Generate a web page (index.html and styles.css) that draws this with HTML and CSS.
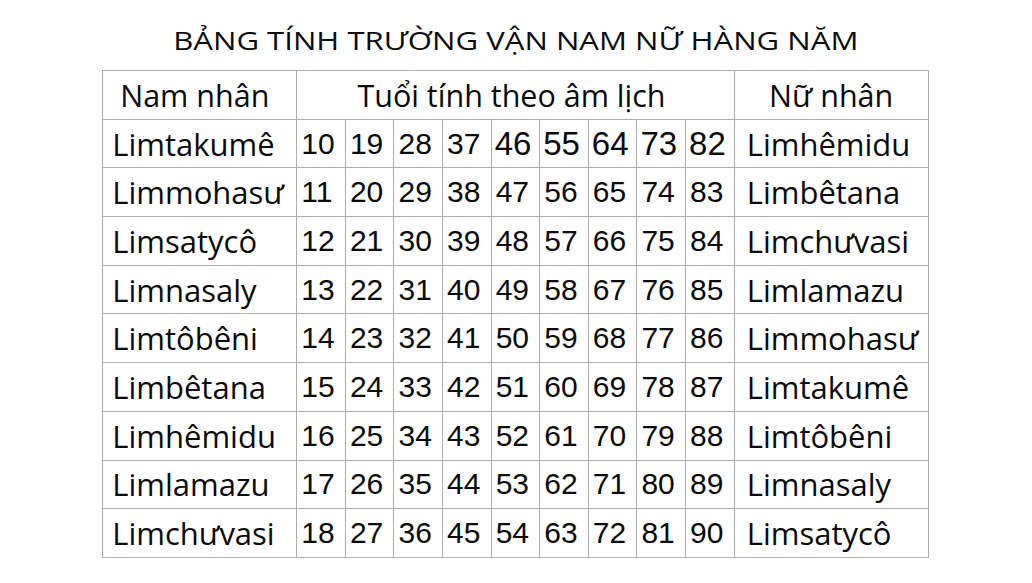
FILE: index.html
```html
<!DOCTYPE html>
<html lang="vi">
<head>
<meta charset="utf-8">
<title>Bảng tính trường vận</title>
<link rel="stylesheet" href="styles.css">
</head>
<body>
<main class="page">
  <h1 class="title">BẢNG TÍNH TRƯỜNG VẬN NAM NỮ HÀNG NĂM</h1>
  <table class="grid">
    <colgroup>
      <col class="c-name">
      <col class="c-num"><col class="c-num"><col class="c-num"><col class="c-num"><col class="c-num"><col class="c-num"><col class="c-num"><col class="c-num"><col class="c-num">
      <col class="c-name">
    </colgroup>
    <thead>
      <tr>
        <th class="head head-left">Nam nhân</th>
        <th class="head head-mid" colspan="9">Tuổi tính theo âm lịch</th>
        <th class="head">Nữ nhân</th>
      </tr>
    </thead>
    <tbody>
      <tr><td class="name">Limtakumê</td><td class="num">10</td><td class="num">19</td><td class="num">28</td><td class="num">37</td><td class="num big">46</td><td class="num big">55</td><td class="num big">64</td><td class="num big">73</td><td class="num big">82</td><td class="name right">Limhêmidu</td></tr>
      <tr><td class="name">Limmohasư</td><td class="num">11</td><td class="num">20</td><td class="num">29</td><td class="num">38</td><td class="num">47</td><td class="num">56</td><td class="num">65</td><td class="num">74</td><td class="num">83</td><td class="name right">Limbêtana</td></tr>
      <tr><td class="name">Limsatycô</td><td class="num">12</td><td class="num">21</td><td class="num">30</td><td class="num">39</td><td class="num">48</td><td class="num">57</td><td class="num">66</td><td class="num">75</td><td class="num">84</td><td class="name right">Limchưvasi</td></tr>
      <tr><td class="name">Limnasaly</td><td class="num">13</td><td class="num">22</td><td class="num">31</td><td class="num">40</td><td class="num">49</td><td class="num">58</td><td class="num">67</td><td class="num">76</td><td class="num">85</td><td class="name right">Limlamazu</td></tr>
      <tr><td class="name">Limtôbêni</td><td class="num">14</td><td class="num">23</td><td class="num">32</td><td class="num">41</td><td class="num">50</td><td class="num">59</td><td class="num">68</td><td class="num">77</td><td class="num">86</td><td class="name right">Limmohasư</td></tr>
      <tr><td class="name">Limbêtana</td><td class="num">15</td><td class="num">24</td><td class="num">33</td><td class="num">42</td><td class="num">51</td><td class="num">60</td><td class="num">69</td><td class="num">78</td><td class="num">87</td><td class="name right">Limtakumê</td></tr>
      <tr><td class="name">Limhêmidu</td><td class="num">16</td><td class="num">25</td><td class="num">34</td><td class="num">43</td><td class="num">52</td><td class="num">61</td><td class="num">70</td><td class="num">79</td><td class="num">88</td><td class="name right">Limtôbêni</td></tr>
      <tr><td class="name">Limlamazu</td><td class="num">17</td><td class="num">26</td><td class="num">35</td><td class="num">44</td><td class="num">53</td><td class="num">62</td><td class="num">71</td><td class="num">80</td><td class="num">89</td><td class="name right">Limnasaly</td></tr>
      <tr><td class="name">Limchưvasi</td><td class="num">18</td><td class="num">27</td><td class="num">36</td><td class="num">45</td><td class="num">54</td><td class="num">63</td><td class="num">72</td><td class="num">81</td><td class="num">90</td><td class="name right">Limsatycô</td></tr>
    </tbody>
  </table>
</main>
</body>
</html>
```

FILE: styles.css
```css
html, body {
  margin: 0;
  padding: 0;
  background: #ffffff;
}

.page {
  width: 1032px;
  height: 583px;
  display: flex;
  flex-direction: column;
  align-items: center;
  padding-top: 25px;
  box-sizing: border-box;
  color: #0a0a0a;
}

.title {
  margin: 0 0 15px 0;
  font-family: "Open Sans", "Noto Sans", sans-serif;
  font-weight: 400;
  font-size: 25.5px;
  line-height: 30px;
  white-space: nowrap;
  transform: scaleX(1.22);
  transform-origin: center;
}

.grid {
  border-collapse: collapse;
  table-layout: fixed;
  width: 826px;
  margin-left: -1px;
}

.c-name { width: 194px; }
.c-num { width: 48.6px; }

.grid th,
.grid td {
  border: 1px solid #adadad;
  padding: 0;
  height: 47.7px;
  overflow: hidden;
  white-space: nowrap;
}

.head {
  font-family: "Open Sans", "Noto Sans", sans-serif;
  font-weight: 400;
  font-size: 30.5px;
  text-align: center;
  height: 47px;
}

.head-left {
  padding-right: 10px !important;
}

.head-mid {
  padding-right: 8px !important;
}

.name {
  font-family: "Open Sans", "Noto Sans", sans-serif;
  font-size: 31px;
  text-align: left;
  padding-left: 9px !important;
}

.name.right {
  padding-left: 12px !important;
}

.num {
  font-family: "Liberation Sans", Arial, sans-serif;
  font-size: 30px;
  text-align: left;
  padding-left: 4px !important;
}

.num.big {
  font-size: 33px;
  padding-left: 3px !important;
}
```
